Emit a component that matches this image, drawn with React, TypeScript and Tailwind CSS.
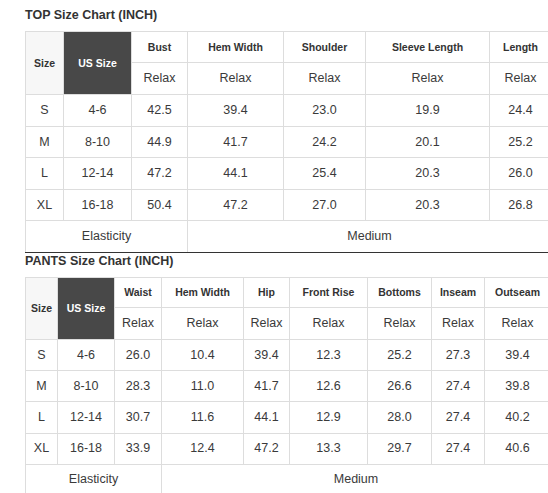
import React from 'react';

type Chart = {
  title: string;
  widths: number[];
  headers: string[];
  rows: string[][];
  split: number;
  head1: string;
  row: string;
};

const top: Chart = {
  title: 'TOP Size Chart (INCH)',
  widths: [38, 68, 56, 96, 82, 124, 62],
  headers: ['Bust', 'Hem Width', 'Shoulder', 'Sleeve Length', 'Length'],
  rows: [
    ['S', '4-6', '42.5', '39.4', '23.0', '19.9', '24.4'],
    ['M', '8-10', '44.9', '41.7', '24.2', '20.1', '25.2'],
    ['L', '12-14', '47.2', '44.1', '25.4', '20.3', '26.0'],
    ['XL', '16-18', '50.4', '47.2', '27.0', '20.3', '26.8'],
  ],
  split: 3,
  head1: 'h-[31px]',
  row: 'h-[31.6px]',
};

const pants: Chart = {
  title: 'PANTS Size Chart (INCH)',
  widths: [32, 57, 47, 82, 46, 78, 64, 53, 66],
  headers: ['Waist', 'Hem Width', 'Hip', 'Front Rise', 'Bottoms', 'Inseam', 'Outseam'],
  rows: [
    ['S', '4-6', '26.0', '10.4', '39.4', '12.3', '25.2', '27.3', '39.4'],
    ['M', '8-10', '28.3', '11.0', '41.7', '12.6', '26.6', '27.4', '39.8'],
    ['L', '12-14', '30.7', '11.6', '44.1', '12.9', '28.0', '27.4', '40.2'],
    ['XL', '16-18', '33.9', '12.4', '47.2', '13.3', '29.7', '27.4', '40.6'],
  ],
  split: 3,
  head1: 'h-[30px]',
  row: 'h-[31.2px]',
};

const cell = 'border border-[#ddd] text-center align-middle p-0';
const headText = 'text-[10.5px] font-bold text-[#333] pt-px';
const bodyText = 'text-[12.5px] text-[#3a3a3a]';

const SizeTable = ({ chart, last }: { chart: Chart; last?: boolean }) => {
  const total = chart.widths.reduce((a, b) => a + b, 0);
  const foot = last ? 'border-b-[#ddd]' : 'border-b-[#333]';
  return (
    <div>
      <h2 className="h-4 leading-4 text-[12.5px] font-bold text-[#333] mb-2">{chart.title}</h2>
      <table className="table-fixed border-collapse" style={{ width: total }}>
        <colgroup>
          {chart.widths.map((w, i) => (
            <col key={i} style={{ width: w }} />
          ))}
        </colgroup>
        <tbody>
          <tr className={chart.head1}>
            <td rowSpan={2} className={`${cell} ${headText} bg-[#f7f7f7]`}>Size</td>
            <td rowSpan={2} className={`${cell} ${headText} bg-[#484848] text-white`}>US Size</td>
            {chart.headers.map((h) => (
              <td key={h} className={`${cell} ${headText}`}>{h}</td>
            ))}
          </tr>
          <tr className="h-[32px]">
            {chart.headers.map((h) => (
              <td key={h} className={`${cell} ${bodyText}`}>Relax</td>
            ))}
          </tr>
          {chart.rows.map((r) => (
            <tr key={r[0]} className={chart.row}>
              {r.map((v, i) => (
                <td key={i} className={`${cell} ${bodyText}`}>{v}</td>
              ))}
            </tr>
          ))}
          <tr className={chart.row}>
            <td colSpan={chart.split} className={`${cell} ${bodyText} ${foot}`}>Elasticity</td>
            <td colSpan={chart.widths.length - chart.split} className={`${cell} ${bodyText} ${foot}`}>Medium</td>
          </tr>
        </tbody>
      </table>
    </div>
  );
}

export default function App() {
  return (
    <div className="w-[548px] h-[493px] overflow-hidden bg-white pl-[25px] pt-[7px] font-['Liberation_Sans',Arial,sans-serif]">
      <SizeTable chart={top} />
      <SizeTable chart={pants} last />
    </div>
  );
}
